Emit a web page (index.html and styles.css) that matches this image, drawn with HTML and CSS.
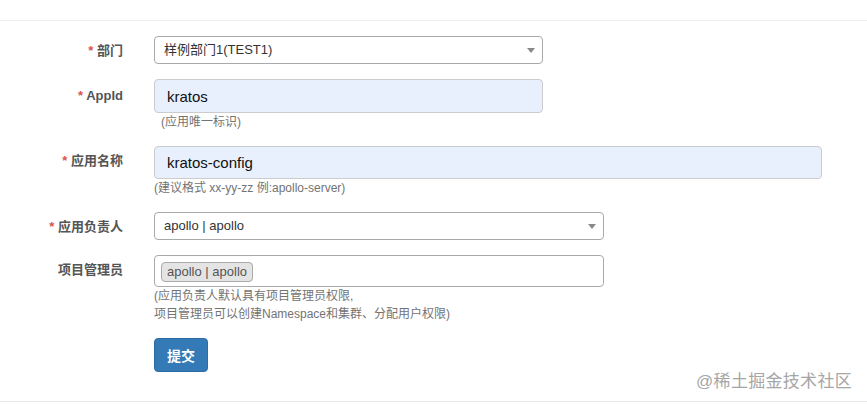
FILE: index.html
```html
<!DOCTYPE html>
<html lang="zh-CN">
<head>
    <meta charset="UTF-8">
    <meta name="viewport" content="width=device-width, initial-scale=1.0">
    <title>创建应用</title>
    <link rel="stylesheet" href="styles.css">
</head>
<body>
    <div class="panel">
        <form class="app-form">
            <div class="form-row row-dept">
                <label class="form-label"><span class="req">*</span> 部门</label>
                <div class="control">
                    <div class="select select-wide">样例部门1(TEST1)</div>
                </div>
            </div>
            <div class="form-row row-appid">
                <label class="form-label"><span class="req">*</span> AppId</label>
                <div class="control">
                    <input type="text" class="input input-appid" value="kratos">
                    <p class="help help-indent">(应用唯一标识)</p>
                </div>
            </div>
            <div class="form-row row-name">
                <label class="form-label"><span class="req">*</span> 应用名称</label>
                <div class="control">
                    <input type="text" class="input input-name" value="kratos-config">
                    <p class="help">(建议格式 xx-yy-zz 例:apollo-server)</p>
                </div>
            </div>
            <div class="form-row row-owner">
                <label class="form-label"><span class="req">*</span> 应用负责人</label>
                <div class="control">
                    <div class="select select-mid">apollo | apollo</div>
                </div>
            </div>
            <div class="form-row row-admin">
                <label class="form-label">项目管理员</label>
                <div class="control">
                    <div class="multi">
                        <span class="tag">apollo | apollo</span>
                    </div>
                    <p class="help help-lines">(应用负责人默认具有项目管理员权限,<br>项目管理员可以创建Namespace和集群、分配用户权限)</p>
                </div>
            </div>
            <div class="form-row row-submit">
                <div class="form-label"></div>
                <div class="control">
                    <button type="button" class="btn">提交</button>
                </div>
            </div>
        </form>
        <div class="watermark">@稀土掘金技术社区</div>
    </div>
</body>
</html>
```

FILE: styles.css
```css
body {
	margin: 0;
	padding-top: 20px;
	background: #fff;
	font-family: "Liberation Sans", "Noto Sans CJK SC", sans-serif;
	color: #333;
}

.panel {
	position: relative;
	border-top: 1px solid #eee;
	border-bottom: 1px solid #e6e6e6;
	padding: 15px 0 29px;
}

.form-row {
	display: flex;
	align-items: flex-start;
	gap: 31px;
}

.form-label {
	width: 123px;
	flex: none;
	text-align: right;
	font-size: 13px;
	font-weight: bold;
	color: #555;
	line-height: 16px;
}

.req {
	color: #d9534f;
}

.row-dept { margin-bottom: 15px; }
.row-dept .form-label { padding-top: 7px; }

.row-appid { margin-bottom: 16px; }
.row-appid .form-label { padding-top: 9px; }

.row-name { margin-bottom: 16px; }
.row-name .form-label { padding-top: 7px; }

.row-owner { margin-bottom: 15px; }
.row-owner .form-label { padding-top: 7px; }

.row-admin { margin-bottom: 15px; }
.row-admin .form-label { padding-top: 7px; }

.select {
	position: relative;
	box-sizing: border-box;
	height: 28px;
	line-height: 26px;
	padding-left: 9px;
	border: 1px solid #aaa;
	border-radius: 4px;
	font-size: 13px;
	color: #333;
	background: #fff;
}

.select::after {
	content: "";
	position: absolute;
	right: 7px;
	top: 11px;
	border-left: 4px solid transparent;
	border-right: 4px solid transparent;
	border-top: 5px solid #888;
}

.select-wide { width: 389px; }
.select-mid { width: 450px; }

.input {
	display: block;
	box-sizing: border-box;
	margin: 0;
	padding: 0 12px;
	border: 1px solid #ccc;
	border-radius: 4px;
	background: #e8f0fe;
	font-family: inherit;
	font-size: 15px;
	color: #111;
	outline: none;
}

.input-appid {
	width: 389px;
	height: 34px;
}

.input-name {
	width: 668px;
	height: 33px;
}

.help {
	margin: 1px 0 0;
	font-size: 12px;
	line-height: 16px;
	color: #737373;
}

.help-indent {
	padding-left: 7px;
}

.help-lines {
	margin-top: 0;
	line-height: 18px;
}

.multi {
	box-sizing: border-box;
	width: 450px;
	height: 32px;
	padding: 6px 0 0 6px;
	border: 1px solid #aaa;
	border-radius: 4px;
}

.tag {
	display: inline-block;
	box-sizing: border-box;
	height: 20px;
	line-height: 18px;
	padding: 0 5px;
	border: 1px solid #aaa;
	border-radius: 4px;
	background: #e4e4e4;
	font-size: 13px;
	color: #555;
}

.btn {
	width: 54px;
	height: 34px;
	padding: 0;
	border: 1px solid #2e6da4;
	border-radius: 4px;
	background: #337ab7;
	color: #fff;
	font-family: inherit;
	font-size: 14px;
	font-weight: bold;
	cursor: pointer;
}

.watermark {
	position: absolute;
	right: 15px;
	bottom: 9px;
	font-size: 17px;
	color: #a6a6a6;
	letter-spacing: 0.3px;
}
```
